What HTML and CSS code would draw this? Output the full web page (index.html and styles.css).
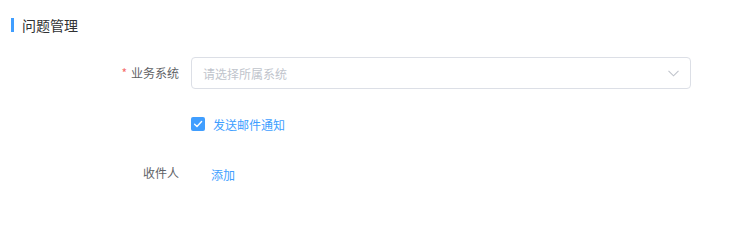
FILE: index.html
```html
<!DOCTYPE html>
<html lang="zh">
<head>
<meta charset="utf-8">
<link rel="stylesheet" href="styles.css">
</head>
<body>
<div class="page">
  <div class="section-title"><span class="bar"></span><span class="title-text">问题管理</span></div>
  <div class="form">
    <div class="form-item">
      <div class="label"><span class="req">*</span>业务系统</div>
      <div class="control">
        <div class="select">
          <span class="placeholder">请选择所属系统</span>
          <svg class="chev" width="11" height="7" viewBox="0 0 11 7"><path d="M0.5 0.8 L5.5 5.8 L10.5 0.8" fill="none" stroke="#c0c4cc" stroke-width="1.1"/></svg>
        </div>
      </div>
    </div>
    <div class="form-item">
      <div class="label"></div>
      <div class="control">
        <label class="checkbox">
          <span class="box"><svg width="14" height="14" viewBox="0 0 14 14"><path d="M3.6 7.2 L6 9.4 L10.6 4.6" fill="none" stroke="#fff" stroke-width="1.4" stroke-linecap="round" stroke-linejoin="round"/></svg></span>
          <span class="cb-text">发送邮件通知</span>
        </label>
      </div>
    </div>
    <div class="form-item">
      <div class="label">收件人</div>
      <div class="control">
        <span class="link">添加</span>
      </div>
    </div>
  </div>
</div>
</body>
</html>
```
FILE: styles.css
```css
html, body {
  margin: 0;
  padding: 0;
  background: #ffffff;
}
body {
  font-family: "Noto Sans CJK SC", "Noto Sans", sans-serif;
  -webkit-font-smoothing: antialiased;
}
.page {
  width: 735px;
  height: 213px;
}
.section-title {
  display: flex;
  align-items: center;
  padding-top: 18px;
  padding-left: 11px;
  height: 14px;
}
.bar {
  width: 3px;
  height: 14px;
  background: #409eff;
  margin-right: 8px;
}
.title-text {
  font-size: 14px;
  line-height: 14px;
  color: #303133;
}
.form {
  margin-top: 25px;
}
.form-item {
  display: flex;
  align-items: center;
  height: 32px;
  margin-bottom: 18px;
}
.label {
  width: 179px;
  padding-right: 12px;
  text-align: right;
  font-size: 12px;
  line-height: 32px;
  color: #606266;
}
.req {
  color: #f56c6c;
  margin-right: 4px;
}
.control {
  display: flex;
  align-items: center;
}
.select {
  box-sizing: border-box;
  width: 500px;
  height: 32px;
  border: 1px solid #dcdfe6;
  border-radius: 4px;
  display: flex;
  align-items: center;
  justify-content: space-between;
  padding: 0 11px 0 11px;
}
.placeholder {
  font-size: 12px;
  color: #c0c4cc;
}
.chev {
  display: block;
}
.checkbox {
  display: flex;
  align-items: center;
  margin-top: 2px;
}
.box {
  width: 14px;
  height: 14px;
  border-radius: 2px;
  background: #409eff;
  display: block;
}
.box svg {
  display: block;
}
.cb-text {
  margin-left: 8px;
  font-size: 12px;
  color: #409eff;
}
.link {
  margin-left: 20px;
  font-size: 12px;
  color: #409eff;
  margin-top: 2px;
}
```
